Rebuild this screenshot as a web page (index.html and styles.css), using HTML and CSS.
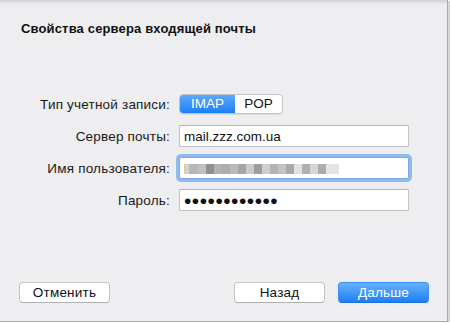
FILE: index.html
```html
<!DOCTYPE html>
<html lang="ru">
<head>
    <meta charset="UTF-8">
    <title>Свойства сервера входящей почты</title>
    <link rel="stylesheet" href="styles.css">
</head>
<body>
    <div class="window">
        <h2 class="title">Свойства сервера входящей почты</h2>

        <div class="form">
            <label class="label">Тип учетной записи:</label>
            <div class="field-cell">
                <div class="segmented">
                    <span class="segment active">IMAP</span>
                    <span class="segment">POP</span>
                </div>
            </div>

            <label class="label">Сервер почты:</label>
            <div class="input">mail.zzz.com.ua</div>

            <label class="label">Имя пользователя:</label>
            <div class="input focused"><span class="blurred"></span></div>

            <label class="label">Пароль:</label>
            <div class="input"><span class="dots">••••••••••••</span></div>
        </div>

        <div class="footer">
            <button class="btn">Отменить</button>
            <div class="footer-right">
                <button class="btn">Назад</button>
                <button class="btn btn-primary">Дальше</button>
            </div>
        </div>
    </div>
</body>
</html>
```

FILE: styles.css
```css
body {
    margin: 0;
    padding: 0;
    background-color: #ffffff;
    font-family: "Liberation Sans", Arial, sans-serif;
    font-size: 13.5px;
    color: #111111;
}

.window {
    width: 447px;
    height: 321px;
    display: flex;
    flex-direction: column;
    background-color: #eeedef;
    background-image: linear-gradient(#cfcfd1, #e6e6e8 3px, #eeedef 5px);
    border-right: 1px solid #a9a9ab;
    border-bottom: 1px solid #a9a9ab;
    box-shadow: 2px 1px 0 #d6d6d6;
}

.title {
    margin: 0;
    padding: 21px 0 0 21px;
    font-size: 13px;
    line-height: 16px;
    letter-spacing: 0.15px;
    font-weight: bold;
    color: #111111;
}

.form {
    display: grid;
    grid-template-columns: 170px 230px;
    grid-auto-rows: 22px;
    column-gap: 9px;
    row-gap: 10px;
    margin-top: 56px;
}

.label {
    display: flex;
    align-items: center;
    justify-content: flex-end;
    padding-top: 1px;
    line-height: 16px;
    letter-spacing: 0.2px;
    color: #1a1a1a;
}

.field-cell {
    display: flex;
    align-items: center;
}

.segmented {
    display: flex;
    height: 18px;
    border: 1px solid #c3c3c5;
    border-radius: 4px;
    background-color: #ffffff;
    overflow: hidden;
    box-shadow: 0 1px 0 #dcdcde;
}

.segment {
    display: flex;
    align-items: center;
    justify-content: center;
    line-height: 16px;
}

.segment:first-child {
    width: 55px;
}

.segment:last-child {
    width: 47px;
}

.segment.active {
    color: #ffffff;
    background-image: linear-gradient(#5fa9f8, #1b80f6);
}

.input {
    display: flex;
    align-items: center;
    box-sizing: border-box;
    height: 22px;
    padding: 1px 0 0 4px;
    background-color: #ffffff;
    border: 1px solid #c4c4c6;
    border-top-color: #b3b3b5;
    line-height: 16px;
    color: #111111;
}

.input.focused {
    border-color: #7fa9de;
    border-radius: 2px;
    box-shadow: 0 0 0 3px #90bbf1;
}

.blurred {
    display: block;
    width: 155px;
    height: 10px;
    margin-top: 1px;
    background-image: linear-gradient(to right,
        #e3c98c 0, #e3c98c 1px,
        #d2d2d2 1px, #d2d2d2 5px,
        #b7b7b7 5px, #b7b7b7 14px,
        #c0c0c0 14px, #c0c0c0 22px,
        #909090 22px, #909090 30px,
        #b5b2ae 30px, #b5b2ae 38px,
        #a9aeb3 38px, #a9aeb3 46px,
        #b9b9b9 46px, #b9b9b9 54px,
        #a6a6a6 54px, #a6a6a6 62px,
        #cbcbcb 62px, #cbcbcb 70px,
        #a09d9a 70px, #a09d9a 78px,
        #cfcfcf 78px, #cfcfcf 86px,
        #b3b3b3 86px, #b3b3b3 94px,
        #c3c3c3 94px, #c3c3c3 102px,
        #a9a9a9 102px, #a9a9a9 110px,
        #e2e2e2 110px, #e2e2e2 118px,
        #b1b1b1 118px, #b1b1b1 126px,
        #d6d6d6 126px, #d6d6d6 134px,
        #adadad 134px, #adadad 142px,
        #e4e4e4 142px, #e4e4e4 155px);
}

.dots {
    font-size: 21px;
    line-height: 16px;
    letter-spacing: 0.5px;
    color: #111111;
}

.footer {
    display: flex;
    justify-content: space-between;
    margin-top: auto;
    padding: 0 18px 18px 19px;
}

.footer-right {
    display: flex;
    gap: 13px;
}

.btn {
    width: 91px;
    height: 21px;
    padding: 0;
    font-family: "Liberation Sans", Arial, sans-serif;
    font-size: 13.5px;
    line-height: 16px;
    letter-spacing: 0.2px;
    color: #111111;
    background-color: #ffffff;
    border: 1px solid #c5c5c7;
    border-bottom-color: #b0b0b2;
    border-radius: 4px;
}

.btn-primary {
    color: #ffffff;
    background-image: linear-gradient(#68b0f9, #1a81f6);
    border-color: #3d8ef2;
    border-bottom-color: #1d6fdc;
}
```
